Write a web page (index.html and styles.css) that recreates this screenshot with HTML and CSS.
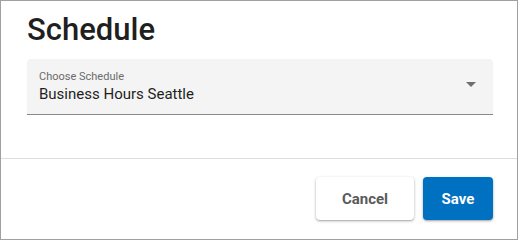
FILE: index.html
```html
<!DOCTYPE html>
<html>
<head>
<meta charset="utf-8">
<link rel="stylesheet" href="styles.css">
</head>
<body>
<div class="dialog">
  <div class="body">
    <h1 class="title">Schedule</h1>
    <div class="field">
      <div class="field-text">
        <div class="label">Choose Schedule</div>
        <div class="value">Business Hours Seattle</div>
      </div>
      <span class="arrow"></span>
    </div>
  </div>
  <div class="footer">
    <button class="btn btn-cancel">Cancel</button>
    <button class="btn btn-save">Save</button>
  </div>
</div>
</body>
</html>
```
FILE: styles.css
```css
html, body {
  margin: 0;
  padding: 0;
  background: #ffffff;
}
body {
  font-family: Roboto, "Liberation Sans", sans-serif;
}
.dialog {
  width: 518px;
  height: 240px;
  box-sizing: border-box;
  border: 1px solid #a0a0a0;
  display: flex;
  flex-direction: column;
}
.body {
  padding: 12px 24px 0 26px;
  height: 158px;
  box-sizing: border-box;
  border-bottom: 1px solid #dedede;
}
.title {
  margin: 0 0 12px 0;
  font-size: 31px;
  line-height: 34px;
  font-weight: 500;
  color: #1f1f1f;
}
.field {
  height: 56px;
  box-sizing: border-box;
  background: #f4f4f4;
  border-radius: 4px 4px 0 0;
  border-bottom: 1px solid #8a8a8a;
  padding: 11px 17px 0 12px;
  display: flex;
  align-items: flex-start;
}
.field-text {
  flex: 1;
}
.label {
  font-size: 11px;
  line-height: 14px;
  color: #6b6b6b;
}
.value {
  font-size: 15px;
  line-height: 20px;
  color: #1f1f1f;
}
.arrow {
  margin-top: 12px;
  width: 0;
  height: 0;
  border-left: 5px solid transparent;
  border-right: 5px solid transparent;
  border-top: 5px solid #6e6e6e;
}
.footer {
  display: flex;
  justify-content: flex-end;
  gap: 9px;
  padding: 18px 24px 0 0;
}
.btn {
  height: 43px;
  border: none;
  border-radius: 4px;
  font-family: Roboto, "Liberation Sans", sans-serif;
  font-size: 15px;
  font-weight: 700;
  padding: 0;
  cursor: pointer;
}
.btn-cancel {
  width: 98px;
  background: #ffffff;
  color: #5a5a5a;
  box-shadow: 0 1px 3px rgba(0,0,0,0.3), 0 1px 1px rgba(0,0,0,0.1);
}
.btn-save {
  width: 70px;
  background: #0070c0;
  color: #ffffff;
  box-shadow: 0 1px 3px rgba(0,0,0,0.3), 0 1px 1px rgba(0,0,0,0.1);
}
```
